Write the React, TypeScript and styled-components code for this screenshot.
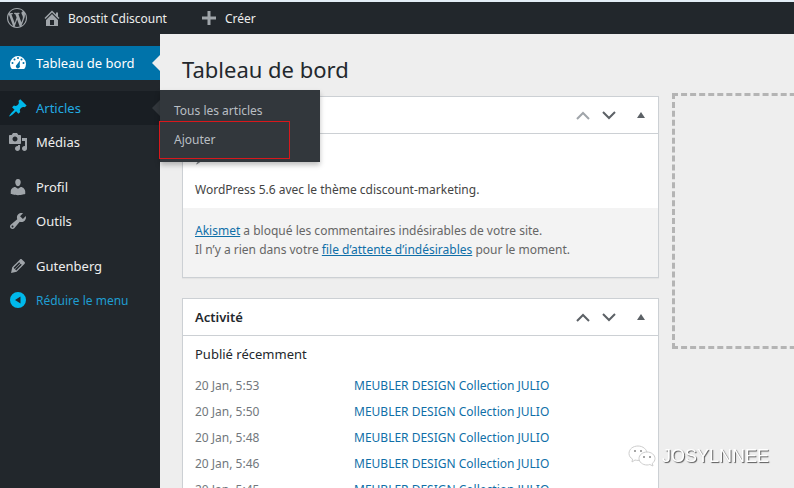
import React from "react";
import styled, { createGlobalStyle, css } from "styled-components";

const GlobalStyle = createGlobalStyle`
  *, *::before, *::after { box-sizing: border-box; }
  body {
    margin: 0;
    background: #eeeeee;
    color: #444;
    font-family: "Noto Sans", "Open Sans", sans-serif;
    font-size: 13px;
    line-height: 19px;
  }
  a { color: #0f6fa8; }
  h1, h2, h3, p, ul { margin: 0; padding: 0; }
  ul { list-style: none; }
`;

const Shell = styled.div`
  display: flex;
  flex-direction: column;
  height: 100vh;
  overflow: hidden;
`;

const AdminBar = styled.header`
  display: flex;
  align-items: center;
  flex: none;
  height: 34px;
  padding: 0 7px;
  border-top: 2px solid #e3edf6;
  background: #22272c;
`;

const BarLink = styled.a<{ $gap: number }>`
  display: flex;
  align-items: center;
  gap: 6px;
  margin-right: ${(p) => p.$gap}px;
  color: #eee;
  font-size: 12px;
  text-decoration: none;
  svg { color: #a0a5aa; }
`;

const Columns = styled.div`
  display: flex;
  flex: 1;
  min-height: 0;
`;

const Sidebar = styled.nav`
  position: relative;
  z-index: 2;
  flex: none;
  width: 160px;
  padding-top: 12px;
  background: #22272c;
`;

const MenuGroup = styled.ul`
  margin-bottom: 11px;
  &:last-of-type { margin-bottom: 0; }
`;

const MenuItem = styled.li`
  position: relative;
`;

type Tone = "plain" | "current" | "hover" | "collapse";

const entry = css<{ $tone: Tone }>`
  display: flex;
  align-items: center;
  gap: 8px;
  width: 100%;
  height: 34px;
  padding: 0 8px;
  border: 0;
  font-family: inherit;
  font-size: ${(p) => (p.$tone === "collapse" ? 12 : 13)}px;
  text-align: left;
  text-decoration: none;
  color: ${(p) => (p.$tone === "hover" ? "#22abe2" : p.$tone === "collapse" ? "#1f9ed2" : p.$tone === "current" ? "#fff" : "#eee")};
  background: ${(p) => (p.$tone === "current" ? "#0073aa" : p.$tone === "hover" ? "#191e23" : "transparent")};
  svg {
    flex: none;
    color: ${(p) => (p.$tone === "plain" ? "#a0a5aa" : p.$tone === "current" ? "#fff" : "#00b9eb")};
  }
`;

const MenuLink = styled.a<{ $tone: Tone }>`${entry}`;
const CollapseButton = styled.button<{ $tone: Tone }>`${entry}`;

const Notch = styled.span<{ $color: string }>`
  position: absolute;
  right: 0;
  top: 50%;
  margin-top: -8px;
  border: 8px solid transparent;
  border-left: 0;
  border-right-color: ${(p) => p.$color};
`;

const Submenu = styled.ul`
  position: absolute;
  left: 100%;
  top: -1px;
  width: 160px;
  padding: 6px 0 3px;
  background: #32373c;
  box-shadow: 0 3px 5px rgba(0, 0, 0, 0.25);
`;

const SubLink = styled.a<{ $marked?: boolean }>`
  display: block;
  margin: 0 30px 0 -1px;
  padding: ${(p) => (p.$marked ? "8px 14px" : "5px 14px 0")};
  border: ${(p) => (p.$marked ? "1px solid #d8181c" : "0 solid transparent")};
  border-left: 1px solid ${(p) => (p.$marked ? "#d8181c" : "transparent")};
  color: #b9bec3;
  font-size: 12px;
  line-height: 20px;
  text-decoration: none;
`;

const Content = styled.main`
  flex: 1;
  min-width: 0;
  padding: 22px 0 0 22px;
  overflow: hidden;
`;

const Title = styled.h1`
  color: #23282d;
  font-size: 22px;
  font-weight: 400;
  line-height: 26px;
`;

const Board = styled.div`
  display: grid;
  grid-template-columns: minmax(477px, 1fr) 477px;
  gap: 13px;
  align-items: start;
  margin-top: 11px;
`;

const Stack = styled.div`
  display: flex;
  flex-direction: column;
  gap: 20px;
  padding-top: 3px;
`;

const DropZone = styled.div`
  height: 256px;
  border: 3px dashed #b4b4b4;
`;

const Postbox = styled.section`
  border: 1px solid #ccd0d4;
  background: #fff;
  box-shadow: 0 1px 1px rgba(0, 0, 0, 0.04);
`;

const BoxHeader = styled.div`
  display: flex;
  align-items: center;
  height: 37px;
  padding: 0 6px 0 12px;
  border-bottom: 1px solid #ccd0d4;
`;

const BoxTitle = styled.h2`
  flex: 1;
  color: #23282d;
  font-size: 13px;
  font-weight: 600;
`;

const Handles = styled.div`
  display: flex;
  margin-left: auto;
`;

const Handle = styled.button<{ $wide?: boolean }>`
  display: flex;
  align-items: center;
  justify-content: center;
  width: ${(p) => (p.$wide ? 30 : 26)}px;
  height: 36px;
  padding: ${(p) => (p.$wide ? "0 0 0 8px" : "0")};
  border: 0;
  background: none;
  color: #5c6166;
  &:disabled { color: #a0a5aa; }
`;

const Glance = styled.div`
  padding: 12px 12px 9px;
  svg { display: block; margin-bottom: 14px; color: #82878c; }
`;

const BoxFooter = styled.div`
  padding: 13px 12px 18px;
  background: #f3f3f3;
  color: #666;
  font-size: 12px;
`;

const GlanceText = styled.p`
  font-size: 12px;
`;

const Activity = styled.div`
  padding: 9px 12px 12px;
`;

const SubTitle = styled.h3`
  margin-bottom: 8px;
  color: #23282d;
  font-size: 13px;
  font-weight: 400;
`;

const PostRow = styled.li`
  display: flex;
  height: 26px;
  align-items: center;
  font-size: 12px;
  span { width: 159px; color: #72777c; }
  a { text-decoration: none; }
`;

const Watermark = styled.div`
  position: fixed;
  right: 25px;
  bottom: 20px;
  z-index: 3;
  display: flex;
  align-items: center;
  gap: 6px;
  color: #fff;
  font-family: "Liberation Sans", sans-serif;
  font-size: 18px;
  line-height: 24px;
  text-shadow: 1px 1px 1px #555;
`;

const paths = {
  home: "M16 8.5l1.53 1.53-1.06 1.06L10 4.6l-6.47 6.49-1.06-1.06L10 2.5l4 4v-2h2v4zm-6-2.46l6 5.99V18H4v-5.97zM12 17v-5H8v5h4z",
  plus: "M17 8.5v3h-5.500v5.500h-3v-5.500h-5.500v-3h5.500V3h3v5.500z",
  post: "M10.44 3.02l1.82-1.82 6.36 6.35-1.83 1.82c-1.05-.68-2.48-.57-3.41.36l-.75.75c-.92.93-1.04 2.35-.35 3.41l-1.83 1.82-2.41-2.41-2.8 2.79c-.42.42-3.38 2.71-3.8 2.29s1.86-3.39 2.28-3.81l2.79-2.79L4.1 9.36l1.83-1.82c1.05.69 2.48.57 3.4-.36l.75-.75c.93-.92 1.05-2.35.36-3.41z",
  media: "M13 11V4c0-.55-.45-1-1-1h-1.670L9 1H5L3.670 3H2c-.55 0-1 .45-1 1v7c0 .55.45 1 1 1h10c.55 0 1-.45 1-1zM7 4.500c1.380 0 2.500 1.120 2.500 2.500S8.380 9.500 7 9.500 4.500 8.380 4.500 7 5.620 4.500 7 4.500zM14 6h5v10.500c0 1.380-1.120 2.500-2.500 2.500S14 17.880 14 16.500s1.120-2.500 2.500-2.500c.17 0 .34.02.5.05V9h-3V6zm-4 8.050V13h2v3.500c0 1.380-1.120 2.500-2.500 2.500S7 17.880 7 16.500 8.120 14 9.500 14c.17 0 .34.02.5.05z",
  user: "M10 9.250c-2.270 0-2.730-3.440-2.730-3.440C7 4.020 7.820 2 9.970 2c2.160 0 2.980 2.020 2.710 3.810 0 0-.41 3.440-2.680 3.440zm0 2.570L12.720 10c2.390 0 4.520 2.330 4.520 4.530v2.490s-3.650 1.130-7.240 1.130c-3.650 0-7.240-1.130-7.240-1.130v-2.490c0-2.250 1.940-4.480 4.470-4.480z",
  tools: "M16.680 9.770c-1.340 1.340-3.300 1.670-4.950.99l-5.410 6.520c-.99.99-2.590.99-3.580 0s-.99-2.590 0-3.570l6.520-5.420c-.68-1.650-.35-3.610.99-4.950 1.280-1.280 3.120-1.620 4.720-1.060l-2.890 2.890 2.820 2.820 2.860-2.870c.53 1.580.18 3.390-1.080 4.650zM3.810 16.210c.4.39 1.040.39 1.430 0 .4-.4.4-1.040 0-1.430-.39-.4-1.030-.4-1.430 0-.39.39-.39 1.030 0 1.430z",
  edit: "M13.890 3.390l2.710 2.720c.46.46.42 1.240.03 1.640l-8.010 8.020-5.560 1.160 1.160-5.580s7.600-7.630 7.990-8.030c.39-.39 1.220-.39 1.680.07zm-2.730 2.790l-5.590 5.610 1.110 1.110 5.540-5.650zm-2.970 8.230l5.580-5.600-1.070-1.080-5.590 5.600z",
  collapse: "M10 2a8 8 0 1 0 0 16 8 8 0 0 0 0-16zM12.500 6.500v7L7 10z",
  dashboard:
    "M3.760 16h12.480A8 8 0 1 0 3.760 16zM9 5a1 1 0 1 0 2 0 1 1 0 0 0-2 0zM5.500 6.500a1 1 0 1 0 2 0 1 1 0 0 0-2 0zM12.500 6.500a1 1 0 1 0 2 0 1 1 0 0 0-2 0zM3.500 10a1 1 0 1 0 2 0 1 1 0 0 0-2 0zM14.500 10a1 1 0 1 0 2 0 1 1 0 0 0-2 0zM12 7.500L11.700 12.500a2 2 0 1 1-3-.7z",
};

function Icon({ name }: { name: keyof typeof paths }) {
  return (
    <svg width="20" height="20" viewBox="0 0 20 20" fill="currentColor" fillRule="evenodd" aria-hidden="true">
      <path d={paths[name]} />
    </svg>
  );
}

function WordPressMark() {
  return (
    <svg width="20" height="20" viewBox="0 0 20 20" fill="currentColor" aria-hidden="true">
      <path d="M20 10c0-5.510-4.490-10-10-10C4.480 0 0 4.490 0 10c0 5.520 4.480 10 10 10 5.510 0 10-4.480 10-10zM7.780 15.370L4.370 6.220c.55-.02 1.170-.08 1.170-.08.5-.06.44-1.130-.06-1.110 0 0-1.450.11-2.370.11-.18 0-.37 0-.58-.01C4.120 2.690 6.870 1.110 10 1.110c2.330 0 4.450.87 6.050 2.340-.68-.11-1.650.39-1.650 1.580 0 .74.45 1.360.9 2.100.35.61.55 1.360.55 2.460 0 1.490-1.400 5-1.400 5l-3.030-8.370c.54-.02.82-.17.82-.17.5-.05.44-1.250-.06-1.220 0 0-1.440.12-2.380.12-.87 0-2.330-.12-2.330-.12-.5-.03-.56 1.200-.06 1.220l.92.08 1.260 3.410zM17.410 10c.24-.64.74-1.870.43-4.250.7 1.290 1.050 2.710 1.050 4.250 0 3.290-1.730 6.240-4.400 7.780.97-2.590 1.940-5.200 2.920-7.780zM6.100 18.090C3.120 16.650 1.110 13.530 1.110 10c0-1.300.23-2.480.72-3.590C3.250 10.300 4.670 14.200 6.100 18.090zm4.030-6.630l2.580 6.980c-.86.29-1.760.45-2.710.45-.79 0-1.570-.11-2.290-.33.81-2.380 1.620-4.740 2.420-7.100z" />
    </svg>
  );
}

function BoxHandles({ first }: { first?: boolean }) {
  return (
    <Handles>
      <Handle type="button" aria-label="Monter" disabled={first}>
        <svg width="14" height="9" viewBox="0 0 14 9" fill="none" stroke="currentColor" strokeWidth="2">
          <path d="M1 8l6-6 6 6" />
        </svg>
      </Handle>
      <Handle type="button" aria-label="Descendre">
        <svg width="14" height="9" viewBox="0 0 14 9" fill="none" stroke="currentColor" strokeWidth="2">
          <path d="M1 1l6 6 6-6" />
        </svg>
      </Handle>
      <Handle type="button" aria-label="Replier" $wide>
        <svg width="8" height="6" viewBox="0 0 8 6" fill="currentColor">
          <path d="M4 0l4 6H0z" />
        </svg>
      </Handle>
    </Handles>
  );
}

const posts = ["5:53", "5:50", "5:48", "5:46", "5:45"];

export default function App() {
  return (
    <>
      <GlobalStyle />
      <Shell>
        <AdminBar>
          <BarLink href="#" $gap={15} aria-label="WordPress"><WordPressMark /></BarLink>
          <BarLink href="#" $gap={32}><Icon name="home" />Boostit Cdiscount</BarLink>
          <BarLink href="#" $gap={0}><Icon name="plus" />Créer</BarLink>
        </AdminBar>
        <Columns>
          <Sidebar>
            <MenuGroup>
              <MenuItem>
                <MenuLink href="#" $tone="current"><Icon name="dashboard" />Tableau de bord</MenuLink>
                <Notch $color="#eeeeee" />
              </MenuItem>
            </MenuGroup>
            <MenuGroup>
              <MenuItem>
                <MenuLink href="#" $tone="hover"><Icon name="post" />Articles</MenuLink>
                <Notch $color="#32373c" />
                <Submenu>
                  <li><SubLink href="#">Tous les articles</SubLink></li>
                  <li><SubLink href="#" $marked>Ajouter</SubLink></li>
                </Submenu>
              </MenuItem>
              <MenuItem><MenuLink href="#" $tone="plain"><Icon name="media" />Médias</MenuLink></MenuItem>
            </MenuGroup>
            <MenuGroup>
              <MenuItem><MenuLink href="#" $tone="plain"><Icon name="user" />Profil</MenuLink></MenuItem>
              <MenuItem><MenuLink href="#" $tone="plain"><Icon name="tools" />Outils</MenuLink></MenuItem>
            </MenuGroup>
            <MenuGroup>
              <MenuItem><MenuLink href="#" $tone="plain"><Icon name="edit" />Gutenberg</MenuLink></MenuItem>
              <MenuItem>
                <CollapseButton type="button" $tone="collapse"><Icon name="collapse" />Réduire le menu</CollapseButton>
              </MenuItem>
            </MenuGroup>
          </Sidebar>
          <Content>
            <Title>Tableau de bord</Title>
            <Board>
              <Stack>
                <Postbox>
                  <BoxHeader><BoxHandles first /></BoxHeader>
                  <Glance>
                    <Icon name="post" />
                    <GlanceText>WordPress 5.6 avec le thème cdiscount-marketing.</GlanceText>
                  </Glance>
                  <BoxFooter>
                    <p><a href="#">Akismet</a> a bloqué les commentaires indésirables de votre site.</p>
                    <p>Il n’y a rien dans votre <a href="#">file d’attente d’indésirables</a> pour le moment.</p>
                  </BoxFooter>
                </Postbox>
                <Postbox>
                  <BoxHeader><BoxTitle>Activité</BoxTitle><BoxHandles /></BoxHeader>
                  <Activity>
                    <SubTitle>Publié récemment</SubTitle>
                    <ul>
                      {posts.map((time) => (
                        <PostRow key={time}>
                          <span>20 Jan, {time}</span>
                          <a href="#">MEUBLER DESIGN Collection JULIO</a>
                        </PostRow>
                      ))}
                    </ul>
                  </Activity>
                </Postbox>
              </Stack>
              <DropZone />
            </Board>
          </Content>
        </Columns>
        <Watermark>
          <svg width="28" height="24" viewBox="0 0 28 24" fill="#fff" stroke="#ccc" strokeWidth="1" aria-hidden="true">
            <path d="M10 2C5 2 1 5 1 9.500c0 2.500 1.500 4.500 3.500 5.500L4 18l3-2c1 .3 2 .4 3 .4 5 0 9-3 9-7S15 2 10 2z" />
            <path d="M19 8c-4.500 0-8 3-8 6.500S14.500 21 19 21c1 0 2-.2 2.800-.5L25 22l-.7-2.600c1.700-1.200 2.700-3 2.700-4.900C27 11 23.500 8 19 8z" />
            <g fill="#888" stroke="none">
              <circle cx="7" cy="7" r="1" /><circle cx="13" cy="7" r="1" />
              <circle cx="16" cy="13" r="1" /><circle cx="22" cy="13" r="1" />
            </g>
          </svg>
          JOSYLNNEE
        </Watermark>
      </Shell>
    </>
  );
}
